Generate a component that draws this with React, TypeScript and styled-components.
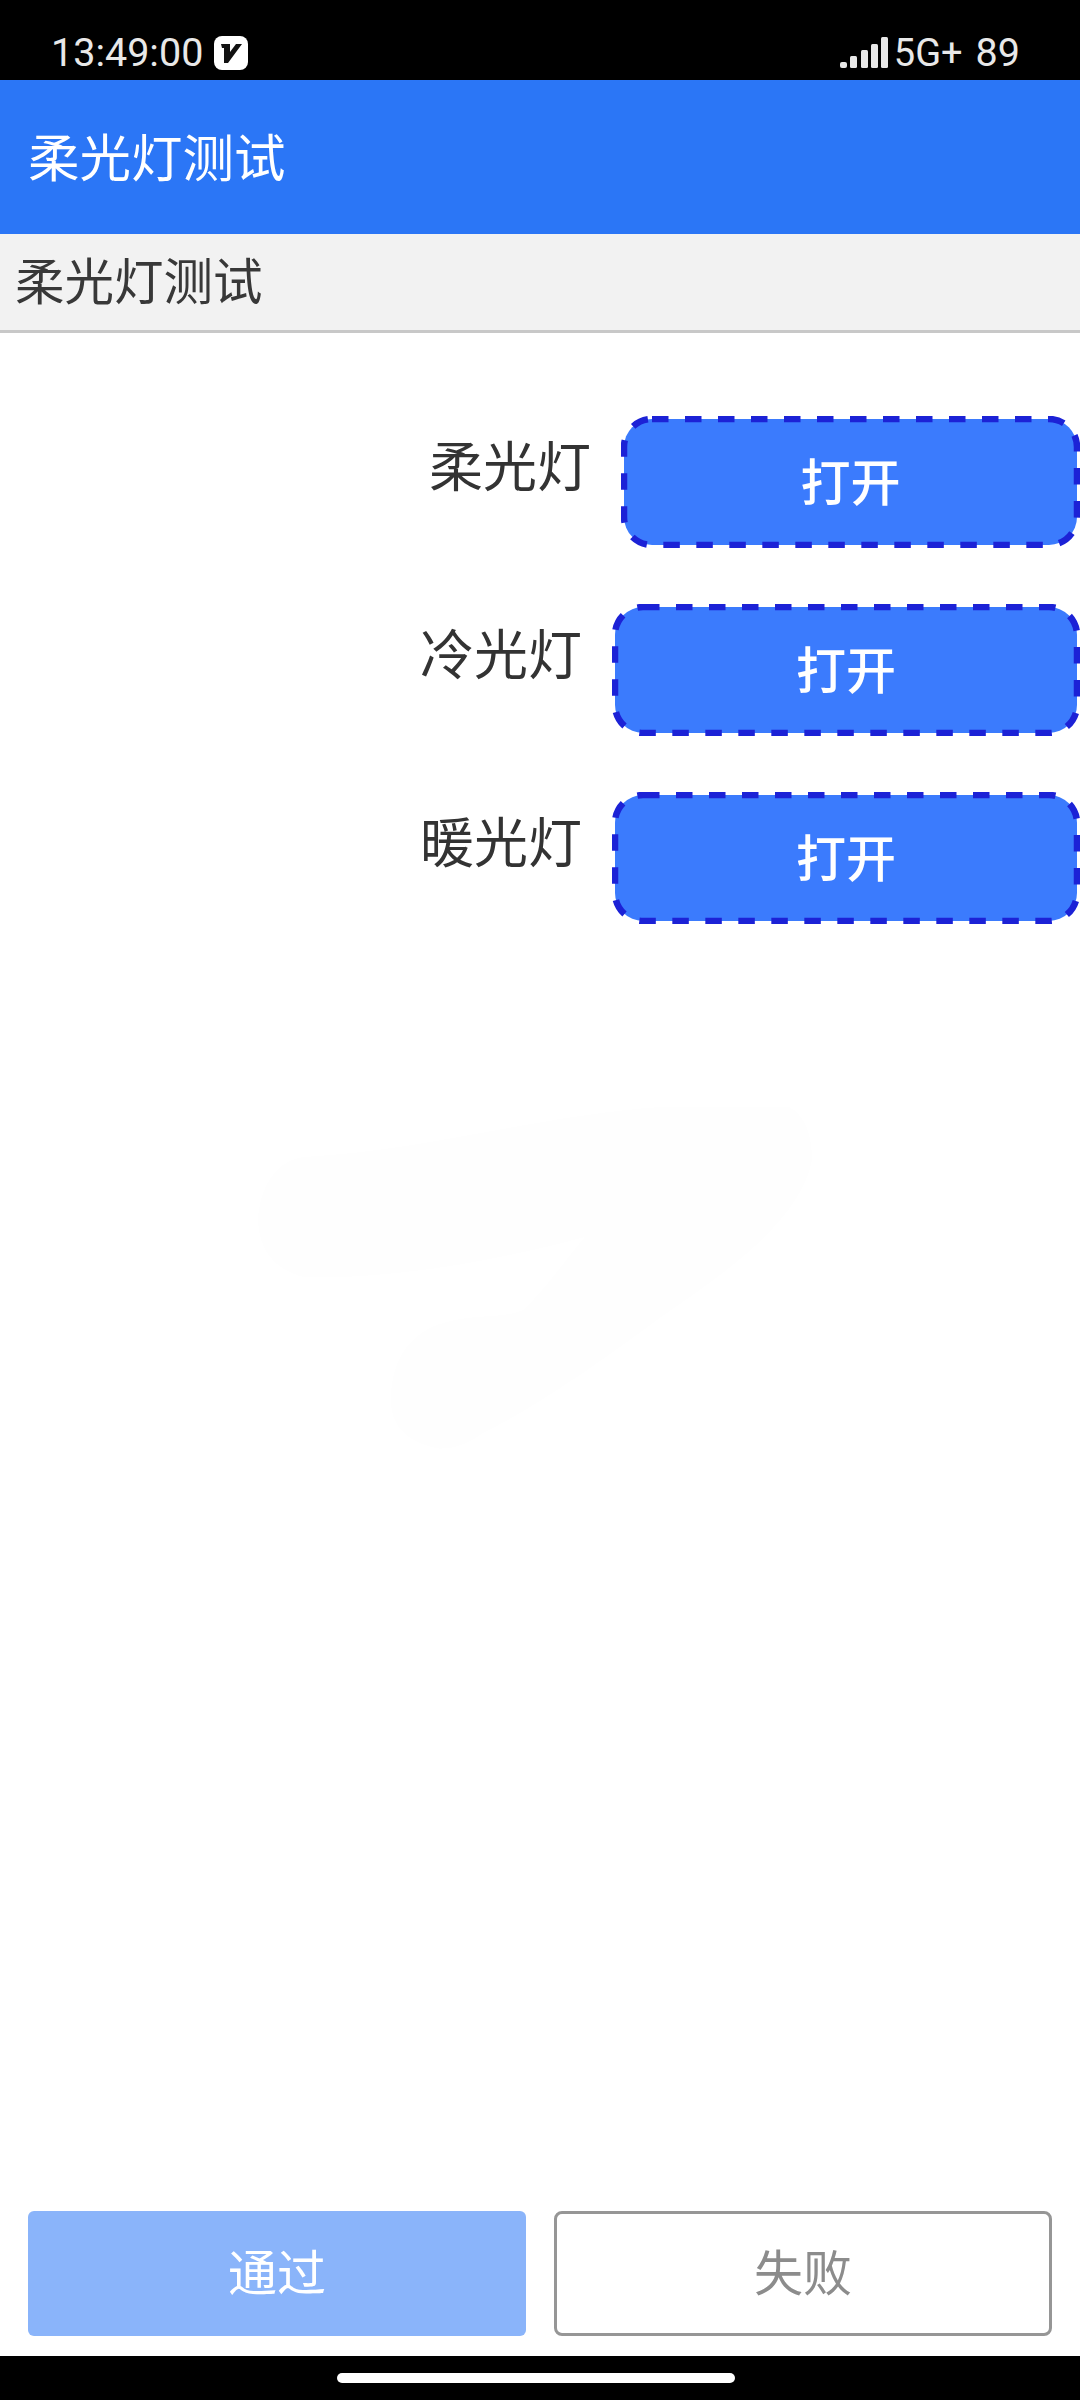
import styled, { createGlobalStyle } from 'styled-components';

const CJK = '"Noto Sans CJK SC", "Noto Sans", sans-serif';

const GlobalStyle = createGlobalStyle`
  html, body {
    margin: 0;
    padding: 0;
    background: #fff;
  }
`;

const Screen = styled.div`
  width: 1080px;
  height: 2400px;
  display: flex;
  flex-direction: column;
  overflow: hidden;
  font-family: ${CJK};
`;

const StatusBar = styled.div`
  height: 80px;
  flex: none;
  background: #000;
  color: #e8e8e8;
  display: flex;
  align-items: center;
  justify-content: space-between;
  padding: 25px 60px 0 51px;
  box-sizing: border-box;
  font-family: Roboto, sans-serif;
  font-size: 39.5px;
`;

const StatusGroup = styled.div`
  display: flex;
  align-items: center;
`;

const Time = styled.span`
  margin-right: 11px;
`;

const Network = styled.span`
  margin-left: 6px;
  font-size: 38px;
`;

const Battery = styled.span`
  margin-left: 13px;
`;

const AppBar = styled.div`
  height: 154px;
  flex: none;
  box-sizing: border-box;
  background: #2b76f6;
  color: #fff;
  display: flex;
  align-items: center;
  padding: 0 0 6px 28px;
  font-size: 51.5px;
`;

const SubHeader = styled.div`
  height: 99px;
  flex: none;
  box-sizing: border-box;
  background: #f2f2f2;
  border-bottom: 3px solid #c8c8c8;
  color: #383838;
  display: flex;
  align-items: center;
  padding: 0 0 8px 15px;
  font-size: 49.5px;
`;

const Content = styled.div`
  flex: 1;
  position: relative;
  display: flex;
  flex-direction: column;
  align-items: flex-end;
  gap: 56px;
  padding-top: 83px;
`;

const Watermark = styled.svg`
  position: absolute;
  left: 250px;
  top: 767px;
`;

const LightRow = styled.div`
  position: relative;
  display: flex;
  align-items: flex-start;
`;

const LightLabel = styled.span`
  font-size: 54px;
  line-height: 70px;
  color: #333;
  margin: 13px 30px 0 0;
`;

const ToggleButton = styled.button`
  position: relative;
  height: 132px;
  box-sizing: border-box;
  background: #3b7bfd;
  background-clip: padding-box;
  border: 3px solid transparent;
  border-radius: 31px;
  color: #fff;
  font-family: ${CJK};
  font-size: 50px;
  font-weight: 500;
  padding: 0 0 6px;
`;

const DashedOutline = styled.svg`
  position: absolute;
  left: -3px;
  top: -3px;
`;

const Footer = styled.div`
  height: 145px;
  flex: none;
  display: grid;
  grid-template-columns: 498px 498px;
  gap: 28px;
  padding: 0 28px;
  box-sizing: border-box;
`;

const PassButton = styled.button`
  height: 125px;
  background: #8ab4fa;
  border: none;
  border-radius: 6px;
  color: #fff;
  font-family: ${CJK};
  font-size: 49px;
  padding: 0 0 8px;
`;

const FailButton = styled.button`
  height: 125px;
  box-sizing: border-box;
  background: #fff;
  border: 3px solid #969696;
  border-radius: 8px;
  color: #8c8c8c;
  font-family: ${CJK};
  font-size: 49px;
  padding: 0 0 8px;
`;

const NavBar = styled.div`
  height: 44px;
  flex: none;
  background: #000;
  display: flex;
  justify-content: center;
  padding: 17px 8px 0 0;
  box-sizing: border-box;
`;

const HomePill = styled.div`
  width: 398px;
  height: 10px;
  border-radius: 5px;
  background: #fff;
`;

const BadgeIcon = () => (
  <svg width="34" height="34" viewBox="0 0 34 34">
    <rect width="34" height="34" rx="8" fill="#fff" />
    <path d="M7 8h9v8l6-8h6L14 27h-4V12H8z" fill="#111" />
  </svg>
);

const SignalIcon = () => (
  <svg width="48" height="32" viewBox="0 0 48 32" fill="#e8e8e8">
    <rect x="0" y="25" width="7" height="6" rx="2" />
    <rect x="10" y="19" width="7" height="12" rx="1.5" />
    <rect x="21" y="13" width="7" height="18" rx="1.5" />
    <rect x="31" y="7" width="7" height="24" rx="1.5" />
    <rect x="41" y="0" width="7" height="31" rx="1.5" />
  </svg>
);

const lights = [
  { name: '柔光灯', width: 459 },
  { name: '冷光灯', width: 468 },
  { name: '暖光灯', width: 468 },
];

export default function App() {
  return (
    <Screen>
      <GlobalStyle />
      <StatusBar>
        <StatusGroup>
          <Time>13:49:00</Time>
          <BadgeIcon />
        </StatusGroup>
        <StatusGroup>
          <SignalIcon />
          <Network>5G+</Network>
          <Battery>89</Battery>
        </StatusGroup>
      </StatusBar>
      <AppBar>柔光灯测试</AppBar>
      <SubHeader>柔光灯测试</SubHeader>
      <Content>
        {/* barely visible logo behind the page */}
        <Watermark width="570" height="350" viewBox="250 1100 570 350">
          <path
            d="M258 1217C262 1180 280 1160 304 1157C430 1150 540 1115 661 1107L789 1107C805 1115 812 1135 812 1160C800 1220 730 1270 661 1317C590 1370 530 1410 483 1433C460 1450 440 1450 432 1447C405 1440 391 1425 391 1400C391 1365 405 1340 432 1327C470 1312 500 1320 523 1310C545 1290 565 1260 585 1237C500 1260 390 1280 304 1277C275 1270 258 1250 258 1217Z"
            fill="#fefefe"
          />
        </Watermark>
        {lights.map(light => (
          <LightRow key={light.name}>
            <LightLabel>{light.name}</LightLabel>
            <ToggleButton style={{ width: light.width }}>
              <DashedOutline width={light.width} height={132}>
                <rect
                  x="3"
                  y="3"
                  width={light.width - 6}
                  height="126"
                  rx="28"
                  fill="none"
                  stroke="#1c22d6"
                  strokeWidth="6.5"
                  strokeDasharray="16.5 16.5"
                />
              </DashedOutline>
              打开
            </ToggleButton>
          </LightRow>
        ))}
      </Content>
      <Footer>
        <PassButton>通过</PassButton>
        <FailButton>失败</FailButton>
      </Footer>
      <NavBar>
        <HomePill />
      </NavBar>
    </Screen>
  );
}
